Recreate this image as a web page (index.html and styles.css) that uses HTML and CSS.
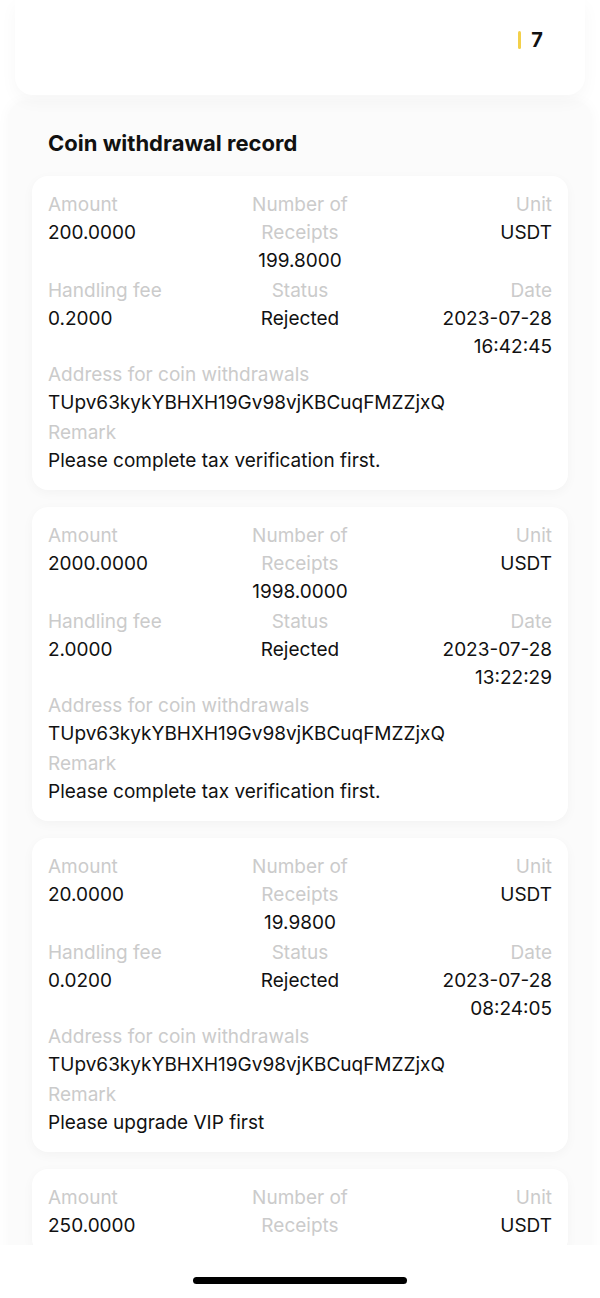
FILE: index.html
```html
<!DOCTYPE html>
<html lang="en">
<head>
    <meta charset="UTF-8">
    <meta name="viewport" content="width=device-width, initial-scale=1.0">
    <title>Coin withdrawal record</title>
    <link rel="stylesheet" href="styles.css">
</head>
<body>
    <div class="screen">
        <div class="scroll">
            <div class="top-card">
                <div class="level">
                    <span class="level-bar"></span>
                    <span class="level-num">7</span>
                </div>
            </div>

            <div class="section">
                <h2 class="section-title">Coin withdrawal record</h2>

                <div class="record">
                    <div class="grid">
                        <div class="cell left"><p class="label">Amount</p><p class="value">200.0000</p></div>
                        <div class="cell center"><p class="label">Number of Receipts</p><p class="value">199.8000</p></div>
                        <div class="cell right"><p class="label">Unit</p><p class="value">USDT</p></div>
                    </div>
                    <div class="grid second">
                        <div class="cell left"><p class="label">Handling fee</p><p class="value">0.2000</p></div>
                        <div class="cell center"><p class="label">Status</p><p class="value">Rejected</p></div>
                        <div class="cell right"><p class="label">Date</p><p class="value">2023-07-28 16:42:45</p></div>
                    </div>
                    <div class="block">
                        <p class="label">Address for coin withdrawals</p>
                        <p class="value">TUpv63kykYBHXH19Gv98vjKBCuqFMZZjxQ</p>
                    </div>
                    <div class="block remark">
                        <p class="label">Remark</p>
                        <p class="value">Please complete tax verification first.</p>
                    </div>
                </div>

                <div class="record">
                    <div class="grid">
                        <div class="cell left"><p class="label">Amount</p><p class="value">2000.0000</p></div>
                        <div class="cell center"><p class="label">Number of Receipts</p><p class="value">1998.0000</p></div>
                        <div class="cell right"><p class="label">Unit</p><p class="value">USDT</p></div>
                    </div>
                    <div class="grid second">
                        <div class="cell left"><p class="label">Handling fee</p><p class="value">2.0000</p></div>
                        <div class="cell center"><p class="label">Status</p><p class="value">Rejected</p></div>
                        <div class="cell right"><p class="label">Date</p><p class="value">2023-07-28 13:22:29</p></div>
                    </div>
                    <div class="block">
                        <p class="label">Address for coin withdrawals</p>
                        <p class="value">TUpv63kykYBHXH19Gv98vjKBCuqFMZZjxQ</p>
                    </div>
                    <div class="block remark">
                        <p class="label">Remark</p>
                        <p class="value">Please complete tax verification first.</p>
                    </div>
                </div>

                <div class="record">
                    <div class="grid">
                        <div class="cell left"><p class="label">Amount</p><p class="value">20.0000</p></div>
                        <div class="cell center"><p class="label">Number of Receipts</p><p class="value">19.9800</p></div>
                        <div class="cell right"><p class="label">Unit</p><p class="value">USDT</p></div>
                    </div>
                    <div class="grid second">
                        <div class="cell left"><p class="label">Handling fee</p><p class="value">0.0200</p></div>
                        <div class="cell center"><p class="label">Status</p><p class="value">Rejected</p></div>
                        <div class="cell right"><p class="label">Date</p><p class="value">2023-07-28 08:24:05</p></div>
                    </div>
                    <div class="block">
                        <p class="label">Address for coin withdrawals</p>
                        <p class="value">TUpv63kykYBHXH19Gv98vjKBCuqFMZZjxQ</p>
                    </div>
                    <div class="block remark">
                        <p class="label">Remark</p>
                        <p class="value">Please upgrade VIP first</p>
                    </div>
                </div>

                <!-- last record, cut by the bottom of the list -->
                <div class="record">
                    <div class="grid">
                        <div class="cell left"><p class="label">Amount</p><p class="value">250.0000</p></div>
                        <div class="cell center"><p class="label">Number of Receipts</p></div>
                        <div class="cell right"><p class="label">Unit</p><p class="value">USDT</p></div>
                    </div>
                </div>
            </div>
        </div>

        <div class="home-bar">
            <span class="home-indicator"></span>
        </div>
    </div>
</body>
</html>
```

FILE: styles.css
```css
* {
    margin: 0;
    padding: 0;
    box-sizing: border-box;
}

:root {
    --text: #111111;
    --label: #cbcbcb;
    --yellow: #f3d04a;
    --section-bg: #fbfbfb;
    --white: #ffffff;
}

body {
    font-family: Inter, "Noto Sans", sans-serif;
    background: var(--white);
    color: var(--text);
    width: 600px;
    height: 1298px;
    overflow: hidden;
}

.screen {
    display: flex;
    flex-direction: column;
    height: 1298px;
}

.scroll {
    height: 1245px;
    overflow: hidden;
    flex-shrink: 0;
}

/* Top card */
.top-card {
    margin: 0 15px;
    height: 95px;
    background: var(--white);
    border-radius: 0 0 18px 18px;
    box-shadow: 0 6px 18px rgba(0, 0, 0, 0.035);
    display: flex;
    justify-content: flex-end;
    padding: 27px 42px 0 0;
    position: relative;
    z-index: 1;
}

.level {
    display: flex;
    align-items: center;
    gap: 10px;
    height: 26px;
}

.level-bar {
    width: 3px;
    height: 18px;
    border-radius: 2px;
    background: var(--yellow);
}

.level-num {
    font-size: 20px;
    font-weight: 700;
}

/* Section */
.section {
    margin: 6px 8px 0;
    padding: 27px 24px 20px;
    background: var(--section-bg);
    border-radius: 18px;
    box-shadow: 0 0 14px rgba(0, 0, 0, 0.03);
}

.section-title {
    font-size: 22px;
    font-weight: 700;
    line-height: 30px;
    padding-left: 16px;
    margin-bottom: 18px;
}

.record {
    background: var(--white);
    border-radius: 16px;
    padding: 15px 16px;
    box-shadow: 0 3px 12px rgba(0, 0, 0, 0.035);
    margin-bottom: 17px;
}

.label,
.value {
    font-size: 19px;
    line-height: 28px;
}

.label {
    color: var(--label);
}

.value {
    color: var(--text);
}

.grid {
    display: grid;
    grid-template-columns: 1fr 116px 1fr;
}

.grid.second {
    margin-top: 2px;
}

.cell.left {
    text-align: left;
}

.cell.center {
    text-align: center;
}

.cell.right {
    text-align: right;
    justify-self: end;
    max-width: 120px;
}

.block.remark {
    margin-top: 2px;
}

/* Home indicator */
.home-bar {
    flex: 1;
    display: flex;
    justify-content: center;
    padding-top: 32px;
}

.home-indicator {
    width: 214px;
    height: 7px;
    border-radius: 4px;
    background: #000;
}
```
